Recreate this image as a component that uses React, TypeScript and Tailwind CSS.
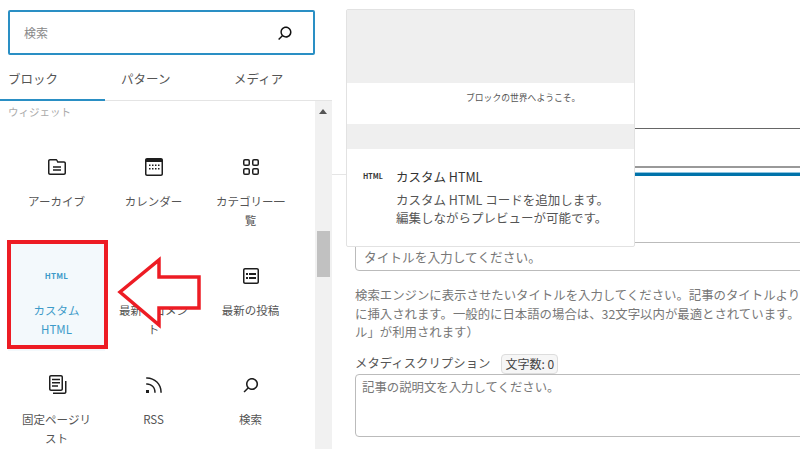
const font = { fontFamily: '"Noto Sans CJK JP", "Noto Sans", sans-serif' }

function WpIcon({ d, className = 'h-6 w-6 text-[#1e1e1e]' }: { d: string; className?: string }) {
  return (
    <svg viewBox="0 0 24 24" fill="currentColor" fillRule="evenodd" className={className}>
      <path d={d} />
    </svg>
  )
}

const searchIcon =
  'M13 5c-3.3 0-6 2.7-6 6 0 1.4.5 2.7 1.3 3.7l-3.8 3.8 1.1 1.1 3.8-3.8c1 .8 2.3 1.3 3.7 1.3 3.3 0 6-2.7 6-6S16.3 5 13 5zm0 10.5c-2.5 0-4.5-2-4.5-4.5s2-4.5 4.5-4.5 4.5 2 4.5 4.5-2 4.5-4.5 4.5z'

const items = [
  {
    label: ['アーカイブ'],
    icon: 'M19 6.2h-5.9l-.6-1.1C12.2 4.5 11.6 4 11 4H5C3.9 4 3 4.9 3 6v12c0 1.1.9 2 2 2h14c1.1 0 2-.9 2-2V8.2c0-1.1-.9-2-2-2zm.5 11.8c0 .3-.2.5-.5.5H5c-.3 0-.5-.2-.5-.5V6c0-.3.2-.5.5-.5h6c.1 0 .3.1.4.3l.9 1.9H19c.3 0 .5.2.5.5V18zM8 12.8h8v-1.5H8v1.5zm0 3h8v-1.5H8v1.5z',
  },
  {
    label: ['カレンダー'],
    icon: 'M19 3H5c-1.1 0-2 .9-2 2v14c0 1.1.9 2 2 2h14c1.1 0 2-.9 2-2V5c0-1.1-.9-2-2-2zm.5 16c0 .3-.2.5-.5.5H5c-.3 0-.5-.2-.5-.5V7h15v12zM8.5 9.5H7V11h1.5V9.5zm0 3.5H7v1.5h1.5V13zm3-3.5H10V11h1.5V9.5zm3 0H13V11h1.5V9.5zm3 0H16V11h1.5V9.5zm-6 3.5H10v1.5h1.5V13zm3 0H13v1.5h1.5V13zm3 0H16v1.5h1.5V13z',
  },
  {
    label: ['カテゴリー一', '覧'],
    icon: 'M6 5.5h3a.5.5 0 01.5.5v3a.5.5 0 01-.5.5H6a.5.5 0 01-.5-.5V6a.5.5 0 01.5-.5zM4 6a2 2 0 012-2h3a2 2 0 012 2v3a2 2 0 01-2 2H6a2 2 0 01-2-2V6zm11-.5h3a.5.5 0 01.5.5v3a.5.5 0 01-.5.5h-3a.5.5 0 01-.5-.5V6a.5.5 0 01.5-.5zM13 6a2 2 0 012-2h3a2 2 0 012 2v3a2 2 0 01-2 2h-3a2 2 0 01-2-2V6zm5 8.5h-3a.5.5 0 00-.5.5v3a.5.5 0 00.5.5h3a.5.5 0 00.5-.5v-3a.5.5 0 00-.5-.5zM15 13a2 2 0 00-2 2v3a2 2 0 002 2h3a2 2 0 002-2v-3a2 2 0 00-2-2h-3zm-9 1.5h3a.5.5 0 01.5.5v3a.5.5 0 01-.5.5H6a.5.5 0 01-.5-.5v-3a.5.5 0 01.5-.5zM4 15a2 2 0 012-2h3a2 2 0 012 2v3a2 2 0 01-2 2H6a2 2 0 01-2-2v-3z',
  },
  { label: ['カスタム', 'HTML'], html: true },
  {
    // mostly covered by the red arrow, only this corner shows
    label: ['最新のコメン', 'ト'],
    icon: 'M5 4h3v1.5H6.5V7H5z',
  },
  {
    label: ['最新の投稿'],
    icon: 'M18 4H6c-1.1 0-2 .9-2 2v12c0 1.1.9 2 2 2h12c1.1 0 2-.9 2-2V6c0-1.1-.9-2-2-2zm.5 14c0 .3-.2.5-.5.5H6c-.3 0-.5-.2-.5-.5V6c0-.3.2-.5.5-.5h12c.3 0 .5.2.5.5v12zM7 11h2V9H7v2zm0 4h2v-2H7v2zm3-4h7V9h-7v2zm0 4h7v-2h-7v2z',
  },
  {
    label: ['固定ページリ', 'スト'],
    icon: 'M7 13.8h6v-1.5H7v1.5zM18 16V4c0-1.1-.9-2-2-2H6c-1.1 0-2 .9-2 2v12c0 1.1.9 2 2 2h10c1.1 0 2-.9 2-2zM5.5 16V4c0-.3.2-.5.5-.5h10c.3 0 .5.2.5.5v12c0 .3-.2.5-.5.5H6c-.3 0-.5-.2-.5-.5zM7 10.5h8V9H7v1.5zm0-3.2h8V5.8H7v1.5zM20 8v11c0 .3-.2.5-.5.5H8V21h11.5c1.1 0 2-.9 2-2V8H20z',
  },
  {
    label: ['RSS'],
    icon: 'M5 10.2h-.8v1.5H5c1.9 0 3.8.8 5.1 2.1 1.4 1.4 2.1 3.2 2.1 5.1v.8h1.5V19c0-2.3-.9-4.5-2.6-6.2-1.6-1.6-3.8-2.6-6.1-2.6zm10.4-1.6C12.6 5.8 8.9 4.2 5 4.2h-.8v1.5H5c3.5 0 6.9 1.4 9.4 3.9s3.9 5.8 3.9 9.4v.8h1.5V19c0-3.9-1.6-7.6-4.4-10.4zM4 20h3v-3H4v3z',
  },
  { label: ['検索'], icon: searchIcon },
]

function BlockItem({ item }: { item: (typeof items)[number] }) {
  return (
    <div className={`flex flex-col items-center pt-[22px] ${item.html ? 'bg-[#f3f9fc] text-[#3d9bc9]' : 'text-[#555]'}`}>
      <div className="flex h-6 w-6 items-center justify-center">
        {item.html ? (
          <span className="text-[8px] font-bold tracking-[0.2px]">HTML</span>
        ) : (
          <WpIcon d={item.icon!} />
        )}
      </div>
      <div className="mt-[13px] text-center text-[11.5px] leading-[18.5px]">
        {item.label.map((line) => (
          <div key={line}>{line}</div>
        ))}
      </div>
    </div>
  )
}

function Inserter() {
  return (
    <div className="flex w-[332px] shrink-0 flex-col">
      {/* Search */}
      <div className="px-2 pt-[10px]">
        <div className="flex h-[45px] w-[307px] items-center justify-between rounded-[2px] border-2 border-[#2a8fc4] pl-[14px] pr-[17px]">
          <span className="text-[12px] text-[#888]">検索</span>
          <WpIcon d={searchIcon} className="h-[22px] w-[22px] text-[#111]" />
        </div>
      </div>

      {/* Tabs */}
      <div className="flex h-[46px] border-b border-[#e4e4e4] text-[12.5px] text-[#555]">
        <div className="-mb-px w-[105px] border-b-2 border-[#2a8fc4] pl-2 pt-[15px]">ブロック</div>
        <div className="w-[113px] pl-[16px] pt-[15px]">パターン</div>
        <div className="pl-[16px] pt-[15px]">メディア</div>
      </div>

      {/* Block list */}
      <div className="flex min-h-0 flex-1 overflow-hidden">
        <div className="w-[315px] shrink-0 pl-2">
          <div className="h-[32px] pt-[2px] text-[10.5px] leading-[17px] text-[#aaa]">ウィジェット</div>
          <div className="grid grid-cols-[97px_97px_97px] auto-rows-[109px]">
            {items.map((item) => (
              <BlockItem key={item.label[0]} item={item} />
            ))}
          </div>
        </div>
        <div className="flex w-[17px] shrink-0 flex-col items-center bg-[#f1f1f1] pr-px">
          <div className="mt-[8px] h-0 w-0 border-x-[4px] border-b-[5px] border-x-transparent border-b-[#555]" />
          <div className="mt-[117px] h-[46px] w-[13px] bg-[#c1c1c1]" />
        </div>
      </div>
    </div>
  )
}

function Preview() {
  return (
    <div className="absolute left-[346px] top-[9px] flex h-[238px] w-[289px] flex-col rounded-[2px] border border-[#e2e2e2] bg-white">
      <div className="h-[73px] bg-[#efefef]" />
      <div className="h-[41px] pl-[119px] pt-[7px] text-[8.8px] leading-[16px] text-[#555]">ブロックの世界へようこそ。</div>
      <div className="h-[25px] bg-[#efefef]" />
      <div className="flex pl-[16px] pt-[18px]">
        <span className="w-[33px] pt-[2px] text-[7px] font-bold leading-[14px] text-[#333]">HTML</span>
        <div className="text-[12.5px] text-[#555]">
          <div className="leading-[20px] text-[#333]">カスタム HTML</div>
          <div className="mt-[4px] leading-[18px]">カスタム HTML コードを追加します。</div>
          <div className="leading-[18px]">編集しながらプレビューが可能です。</div>
        </div>
      </div>
    </div>
  )
}

function Editor() {
  return (
    <div className="min-w-0 flex-1 overflow-hidden">
      <div className="pl-[23px]">
        <div className="h-[129px] border-b border-[#666]" />
        <div className="h-[39px] border-b-2 border-[#999]" />
      </div>
      <div className="mt-[4px] flex h-[4px] items-center">
        <div className="h-px w-[23px] bg-[#e5e5e5]" />
        <div className="h-[4px] flex-1 border-t border-[#8cc4e0] bg-[#0073aa]" />
      </div>
      <div className="pl-[23px]">
        <div className="mt-[66px] -mr-[10px] flex h-[29px] items-center rounded-[4px] border border-[#bbb] pl-[8px] text-[12.7px] text-[#777]">
          タイトルを入力してください。
        </div>
        <div className="mt-[15px] whitespace-nowrap text-[12.4px] leading-[18.5px] text-[#777]">
          <div>検索エンジンに表示させたいタイトルを入力してください。記事のタイトルより</div>
          <div>に挿入されます。一般的に日本語の場合は、32文字以内が最適とされています。</div>
          <div>ル」が利用されます）</div>
        </div>
        <div className="mt-[12px] flex h-[20px] items-center whitespace-nowrap text-[12.4px] text-[#555]">
          メタディスクリプション
          <span className="ml-[11px] flex h-[20px] items-center rounded-[4px] border border-[#ddd] bg-[#f6f6f6] px-[3px] text-[12px] text-[#444]">文字数: 0</span>
        </div>
        <div className="-mr-[10px] h-[63px] rounded-[4px] border border-[#bbb] pl-[6px] pt-[3px] text-[12.4px] leading-[18px] text-[#777]">
          記事の説明文を入力してください。
        </div>
      </div>
    </div>
  )
}

export default function App() {
  return (
    <div style={font} className="relative flex h-[449px] w-[800px] overflow-hidden bg-white">
      <Inserter />
      <Editor />
      <Preview />

      {/* Red annotation: box and arrow */}
      <div className="absolute left-[7px] top-[240px] h-[109px] w-[101px] border-4 border-[#ed1c24]" />
      <svg viewBox="0 0 800 449" className="pointer-events-none absolute left-0 top-0 h-[449px] w-[800px]">
        <path
          d="M120 292 L159 260 V277 H199 V308 H159 V325 Z"
          fill="#fff"
          stroke="#ed1c24"
          strokeWidth="3.5"
        />
      </svg>
    </div>
  )
}
